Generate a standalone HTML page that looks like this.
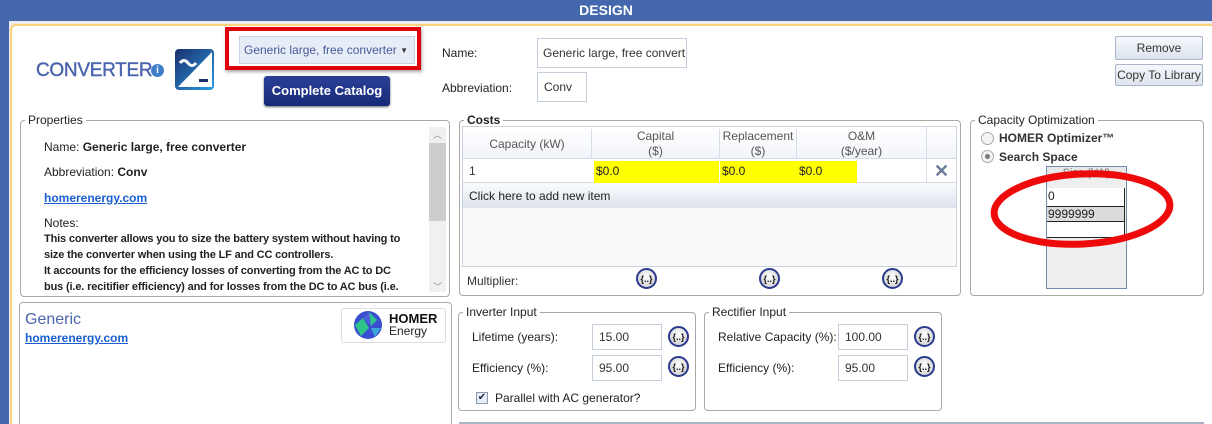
<!DOCTYPE html>
<html><head><meta charset="utf-8"><style>
*{box-sizing:border-box;margin:0;padding:0}
html,body{width:1212px;height:424px;overflow:hidden}
body{background:#ececec;font-family:"Liberation Sans",sans-serif;font-size:12px;color:#222;position:relative}
.a{position:absolute}
.fs{position:absolute;border:1px solid #a8a8a8;border-radius:4px}
.lg{position:absolute;background:#fff;padding:0 3px;top:-8px;left:4px;font-size:12px;color:#222}
.inp{position:absolute;border:1px solid #c5cfdc;background:#fff;padding-left:6px;display:flex;align-items:center;font-size:12px;color:#333}
.mb{position:absolute;width:21px;height:21px;border-radius:50%;border:2px solid #2b3a8e;background:radial-gradient(circle at 50% 40%,#fff,#c8c8c8);font-size:9px;font-weight:bold;color:#111;display:flex;align-items:center;justify-content:center}
.btn{position:absolute;border:1px solid #a9b6c8;border-radius:2px;background:linear-gradient(#f6f8fb,#dde4ee);font-size:12px;color:#333;display:flex;align-items:center;justify-content:center}
a{color:#1a5fd0;font-weight:bold;text-decoration:underline}
</style></head><body>
<div class="a" style="left:0;top:0;width:1212px;height:21px;background:#4467ad;color:#fff;font-weight:bold;font-size:14px;text-align:center;line-height:20px">DESIGN</div>
<div class="a" style="left:0;top:0;width:9px;height:424px;background:#4467ad"></div>
<div class="a" style="left:10px;top:24px;width:1202px;height:400px;background:#fff;border-top:2px solid #fcd27a;border-left:2px solid #fcd27a;border-radius:6px 0 0 0"></div>

<div class="a" style="left:36px;top:60px;font-size:19px;color:#4a65ad;letter-spacing:-0.3px;-webkit-text-stroke:0.4px #4a65ad">CONVERTER</div>
<div class="a" style="left:151px;top:64px;width:13px;height:13px;border-radius:50%;background:#3f7fc8;color:#fff;font-size:10px;font-weight:bold;text-align:center;line-height:13px">i</div>
<svg class="a" style="left:175px;top:49px" width="39" height="41"><defs><linearGradient id="g" x1="0" y1="0" x2="1" y2="1"><stop offset="0" stop-color="#1b2e6e"/><stop offset="1" stop-color="#2a9de0"/></linearGradient></defs><rect x="0" y="0" width="39" height="41" rx="4" fill="url(#g)"/><path d="M37 3 L3 38 L37 38Z" fill="#fff"/><path d="M5 14 q4-5 8 0 t8 0" stroke="#fff" stroke-width="3" fill="none"/><rect x="24" y="30" width="9" height="3" fill="#1b2e6e"/></svg>

<div class="a" style="left:225px;top:27px;width:196px;height:43px;border:4px solid #e0000a;box-shadow:1px 2px 3px rgba(0,0,0,.35)"></div>
<div class="a" style="left:239px;top:36px;width:176px;height:28px;background:#e6edf7;border:1px solid #c8d4e6;font-size:12px;color:#4a5a9a;padding-left:4px;line-height:27px">Generic large, free converter<span style="position:absolute;right:6px;top:0;font-size:8px;color:#333">▼</span></div>
<div class="a" style="left:264px;top:76px;width:126px;height:30px;background:linear-gradient(#2b3f98,#172a78);border-radius:3px;color:#fff;font-weight:bold;font-size:13px;text-align:center;line-height:29px;box-shadow:0 1px 2px #666">Complete Catalog</div>

<div class="a" style="left:442px;top:46px">Name:</div>
<div class="inp" style="left:537px;top:38px;width:150px;height:30px;overflow:hidden;white-space:nowrap;padding-left:5px">Generic large, free convert</div>
<div class="a" style="left:442px;top:81px">Abbreviation:</div>
<div class="inp" style="left:537px;top:72px;width:50px;height:30px">Conv</div>
<div class="btn" style="left:1115px;top:36px;width:88px;height:24px">Remove</div>
<div class="btn" style="left:1115px;top:64px;width:88px;height:22px">Copy To Library</div>

<div class="fs" style="left:20px;top:120px;width:430px;height:177px"><div class="lg" style="top:-8px">Properties</div></div>
<div class="a" style="left:44px;top:139px;font-size:12px;line-height:16px;width:384px;overflow:hidden">
<div>Name: <b>Generic large, free converter</b></div>
<div style="margin-top:9px">Abbreviation: <b>Conv</b></div>
<div style="margin-top:10px"><a>homerenergy.com</a></div>
<div style="margin-top:9px">Notes:</div>
<div style="font-weight:bold;font-size:11px;letter-spacing:-0.15px;height:72px;overflow:hidden;white-space:nowrap">This converter allows you to size the battery system without having to<br>size the converter when using the LF and CC controllers.<br>It accounts for the efficiency losses of converting from the AC to DC<br>bus (i.e. recitifier efficiency) and for losses from the DC to AC bus (i.e.</div>
</div>
<div class="a" style="left:429px;top:127px;width:17px;height:165px;background:#f0f0f0"></div>
<div class="a" style="left:429px;top:143px;width:17px;height:78px;background:#cdcdcd"></div>
<div class="a" style="left:433px;top:128px;font-size:9px;color:#888">︿</div>
<div class="a" style="left:433px;top:280px;font-size:9px;color:#888">﹀</div>

<div class="fs" style="left:19px;top:302px;width:433px;height:130px"></div>
<div class="a" style="left:25px;top:311px;font-size:16px;color:#4a65ad">Generic</div>
<div class="a" style="left:25px;top:331px"><a style="font-size:12px">homerenergy.com</a></div>
<div class="a" style="left:341px;top:308px;width:105px;height:35px;border:1px solid #ddd;border-radius:3px;background:#fff"></div>
<svg class="a" style="left:353px;top:310px" width="30" height="30"><circle cx="15" cy="15" r="14" fill="#3a4fcf"/><path d="M2 15 L10 8 L16 18 L8 26Z" fill="#2fc58a"/><path d="M16 2 L24 10 L18 16Z" fill="#2fc58a"/><path d="M18 18 L28 18 L22 27Z" fill="#38a6d8"/><path d="M10 8 L16 2 L18 16" fill="#4a5fe0"/></svg>
<div class="a" style="left:389px;top:313px;font-weight:bold;font-size:13px;color:#111;line-height:12px">HOMER</div>
<div class="a" style="left:389px;top:325px;font-size:12px;color:#222;line-height:12px">Energy</div>

<div class="fs" style="left:459px;top:120px;width:502px;height:176px"><div class="lg" style="font-weight:bold">Costs</div></div>
<div class="a" style="left:462px;top:126px;width:495px;height:141px;border:1px solid #c9d3e0;background:#fafafa"></div>
<div class="a" style="left:463px;top:127px;width:493px;height:31px;background:linear-gradient(#fff,#f1f4f9);color:#555;font-size:12px">
<div class="a" style="left:0;width:128px;top:10px;text-align:center">Capacity (kW)</div>
<div class="a" style="left:128px;width:128px;top:2px;text-align:center;line-height:15px;border-left:1px solid #d6dde8;height:29px">Capital<br>($)</div>
<div class="a" style="left:256px;width:77px;top:2px;text-align:center;line-height:15px;border-left:1px solid #d6dde8;height:29px">Replacement<br>($)</div>
<div class="a" style="left:333px;width:130px;top:2px;text-align:center;line-height:15px;border-left:1px solid #d6dde8;height:29px">O&amp;M<br>($/year)</div>
<div class="a" style="left:463px;width:30px;top:0;border-left:1px solid #d6dde8;height:31px"></div>
</div>
<div class="a" style="left:463px;top:158px;width:493px;height:25px;background:#fff;border-top:1px solid #d6dde8;border-bottom:1px solid #d6dde8"></div>
<div class="a" style="left:469px;top:164px;color:#333">1</div>
<div class="a" style="left:594px;top:161px;width:125px;height:22px;background:#ffff00;padding:3px 2px">$0.0</div>
<div class="a" style="left:720px;top:161px;width:77px;height:22px;background:#ffff00;padding:3px 2px">$0.0</div>
<div class="a" style="left:797px;top:161px;width:60px;height:22px;background:#ffff00;padding:3px 2px">$0.0</div>
<div class="a" style="left:926px;top:158px;height:25px;border-left:1px solid #d6dde8"></div>
<div class="a" style="left:934px;top:161px;font-size:18px;color:#6b7a99;font-weight:bold">✕</div>
<div class="a" style="left:463px;top:184px;width:493px;height:24px;background:linear-gradient(#f9fafc,#dde3ec);padding:5px 6px;color:#222">Click here to add new item</div>
<div class="a" style="left:467px;top:274px;color:#333">Multiplier:</div>
<div class="mb" style="left:636px;top:268px">{..}</div>
<div class="mb" style="left:759px;top:268px">{..}</div>
<div class="mb" style="left:882px;top:268px">{..}</div>

<div class="fs" style="left:970px;top:120px;width:234px;height:176px"><div class="lg">Capacity Optimization</div></div>
<div class="a" style="left:981px;top:132px;width:13px;height:13px;border-radius:50%;border:1px solid #aaa;background:#f4f4f4"></div>
<div class="a" style="left:999px;top:131px;font-weight:bold;color:#333">HOMER Optimizer™</div>
<div class="a" style="left:981px;top:150px;width:13px;height:13px;border-radius:50%;border:1px solid #aaa;background:radial-gradient(#777 0 2px,#f4f4f4 3px)"></div>
<div class="a" style="left:999px;top:150px;font-weight:bold;color:#333">Search Space</div>
<div class="a" style="left:1046px;top:166px;width:81px;height:123px;border:1px solid #6f8db3;background:#efefef"></div>
<div class="a" style="left:1047px;top:167px;width:79px;height:12px;background:#e8e8e8;color:#777;text-align:center;font-size:11px;line-height:13px;overflow:hidden">Size (kW)</div>
<div class="a" style="left:1047px;top:188px;width:78px;height:18px;background:#fff;border-right:1px solid #222;padding-left:1px;line-height:17px">0</div>
<div class="a" style="left:1047px;top:206px;width:78px;height:16px;background:#dcdcdc;border:1px solid #222;border-left:0;padding-left:1px;line-height:14px">9999999</div>
<div class="a" style="left:1047px;top:222px;width:78px;height:16px;background:#fff;border-right:1px solid #222;border-bottom:1px solid #222"></div>
<svg class="a" style="left:985px;top:165px" width="195" height="90"><ellipse cx="97" cy="44" rx="88" ry="35" fill="none" stroke="#ee0a0a" stroke-width="7" transform="rotate(-3 97 44)"/></svg>

<div class="fs" style="left:458px;top:312px;width:238px;height:99px"><div class="lg">Inverter Input</div></div>
<div class="a" style="left:472px;top:330px">Lifetime (years):</div>
<div class="inp" style="left:592px;top:324px;width:70px;height:26px">15.00</div>
<div class="mb" style="left:668px;top:326px">{..}</div>
<div class="a" style="left:472px;top:361px">Efficiency (%):</div>
<div class="inp" style="left:592px;top:355px;width:70px;height:26px">95.00</div>
<div class="mb" style="left:668px;top:356px">{..}</div>
<div class="a" style="left:476px;top:392px;width:12px;height:12px;border:1px solid #8a9ab0;background:#e8eef6;font-size:10px;line-height:10px;text-align:center;color:#224">✔</div>
<div class="a" style="left:495px;top:391px">Parallel with AC generator?</div>

<div class="fs" style="left:704px;top:312px;width:238px;height:99px"><div class="lg">Rectifier Input</div></div>
<div class="a" style="left:718px;top:330px">Relative Capacity (%):</div>
<div class="inp" style="left:838px;top:324px;width:70px;height:26px">100.00</div>
<div class="mb" style="left:914px;top:326px">{..}</div>
<div class="a" style="left:718px;top:361px">Efficiency (%):</div>
<div class="inp" style="left:838px;top:355px;width:70px;height:26px">95.00</div>
<div class="mb" style="left:914px;top:356px">{..}</div>
<div class="a" style="left:459px;top:422px;width:745px;height:2px;background:#a8b4c4"></div>
</body></html>
